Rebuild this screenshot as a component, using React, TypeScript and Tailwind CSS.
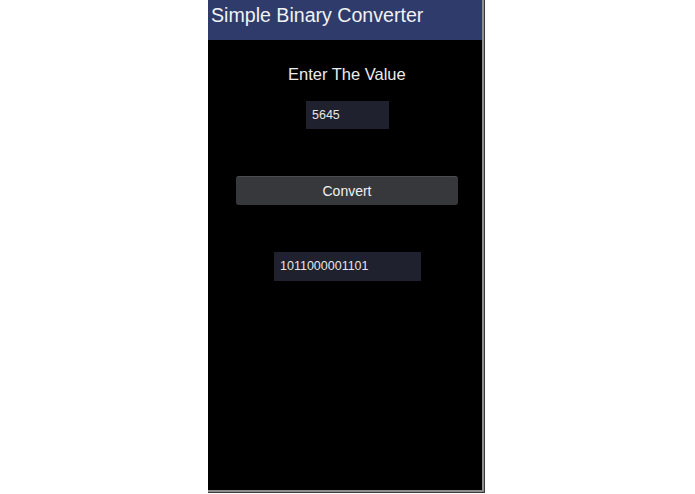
import { useState } from "react";

export default function App() {
  const [value, setValue] = useState("5645");
  const [result, setResult] = useState("1011000001101");

  function handleConvert() {
    const n = parseInt(value, 10);
    setResult(isNaN(n) ? "" : n.toString(2));
  }

  return (
    <div className="h-[494px] w-full overflow-hidden bg-white font-['Liberation_Sans',Arial,sans-serif]">
      <div className="ml-[208px] h-[493px] w-[277px] border-r border-b border-[#3a3a3a]">
        <div className="flex h-full flex-col border-r-2 border-b-2 border-[#8e8e8e] bg-black">
          {/* Header */}
          <header className="h-[40px] shrink-0 bg-[#2f3b6a] pl-[3px] pt-[4px]">
            <h1 className="text-[19.6px] leading-[23px] text-[#f2f2f2]">Simple Binary Converter</h1>
          </header>

          {/* Content */}
          <main className="flex flex-col items-start">
            <p className="ml-[80px] mt-[25px] text-[16.5px] leading-[19px] text-[#ececec]">Enter The Value</p>
            <input
              value={value}
              onChange={(e) => setValue(e.target.value)}
              className="ml-[98px] mt-[17px] h-[28px] w-[83px] bg-[#1f212e] pl-[6px] text-[12.5px] text-[#e6e6e6] outline-none"
            />
            <button
              onClick={handleConvert}
              className="ml-[28px] mt-[47px] h-[29px] w-[222px] rounded-[3px] border-t border-[#4c4d50] bg-[#37383b] text-[14px] text-[#f0f0f0]"
            >
              Convert
            </button>
            <div className="ml-[66px] mt-[47px] flex h-[29px] w-[147px] items-center bg-[#1f212e] pl-[6px] text-[12.5px] text-[#e6e6e6]">
              {result}
            </div>
          </main>
        </div>
      </div>
    </div>
  );
}
